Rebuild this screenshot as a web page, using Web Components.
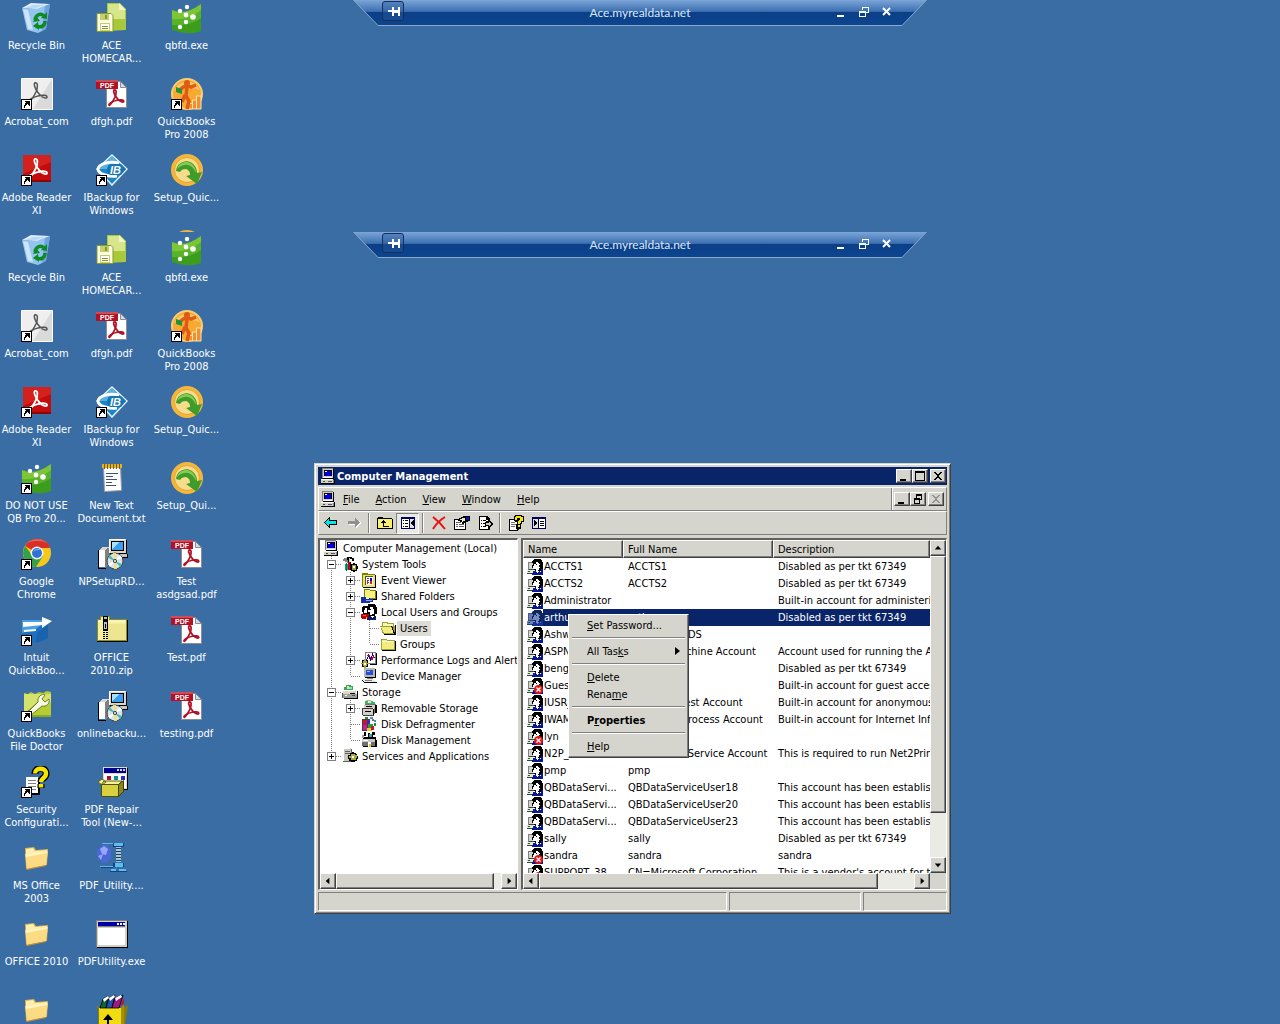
<!DOCTYPE html>
<html lang="en">
<head>
<meta charset="utf-8">
<title>Computer Management</title>
<style>
  :root {
    --desk: #3a6da4;
    --face: #d5d5cd;
    --shade: #808080;
    --dark: #404040;
    --navy: #0a246a;
    --ui-font: "DejaVu Sans Condensed", "DejaVu Sans", sans-serif;
  }
  html, body {
    margin: 0;
    height: 100%;
  }
  body {
    background: var(--desk);
    font: 11px/13px var(--ui-font);
    color: #000;
    overflow: hidden;
  }
</style>
</head>
<body>

<desk-screen class="upper" style="--screen: 232px">
  <remote-bar slot="bar">Ace.myrealdata.net</remote-bar>
  <desk-icon icon="recycle">Recycle Bin</desk-icon>
  <desk-icon icon="homecare">ACE<br>HOMECAR...</desk-icon>
  <desk-icon icon="qbfd">qbfd.exe</desk-icon>
  <desk-icon icon="acrobat" shortcut>Acrobat_com</desk-icon>
  <desk-icon icon="pdf">dfgh.pdf</desk-icon>
  <desk-icon icon="quickbooks" shortcut>QuickBooks<br>Pro 2008</desk-icon>
  <desk-icon icon="reader" shortcut>Adobe Reader<br>XI</desk-icon>
  <desk-icon icon="ibackup" shortcut>IBackup for<br>Windows</desk-icon>
  <desk-icon icon="setup">Setup_Quic...</desk-icon>
  <desk-icon icon="setup" style="grid-column: 3"></desk-icon>
</desk-screen>

<desk-screen class="lower" style="--screen: calc(100vh - 232px)">
  <remote-bar slot="bar">Ace.myrealdata.net</remote-bar>
  <desk-icon icon="recycle">Recycle Bin</desk-icon>
  <desk-icon icon="homecare">ACE<br>HOMECAR...</desk-icon>
  <desk-icon icon="qbfd">qbfd.exe</desk-icon>
  <desk-icon icon="acrobat" shortcut>Acrobat_com</desk-icon>
  <desk-icon icon="pdf">dfgh.pdf</desk-icon>
  <desk-icon icon="quickbooks" shortcut>QuickBooks<br>Pro 2008</desk-icon>
  <desk-icon icon="reader" shortcut>Adobe Reader<br>XI</desk-icon>
  <desk-icon icon="ibackup" shortcut>IBackup for<br>Windows</desk-icon>
  <desk-icon icon="setup">Setup_Quic...</desk-icon>
  <desk-icon icon="qbfd" shortcut>DO NOT USE<br>QB Pro 20...</desk-icon>
  <desk-icon icon="textdoc">New Text<br>Document.txt</desk-icon>
  <desk-icon icon="setup">Setup_Qui...</desk-icon>
  <desk-icon icon="chrome" shortcut>Google<br>Chrome</desk-icon>
  <desk-icon icon="installer">NPSetupRD...</desk-icon>
  <desk-icon icon="pdf">Test<br>asdgsad.pdf</desk-icon>
  <desk-icon icon="intuit" shortcut>Intuit<br>QuickBoo...</desk-icon>
  <desk-icon icon="zip">OFFICE<br>2010.zip</desk-icon>
  <desk-icon icon="pdf">Test.pdf</desk-icon>
  <desk-icon icon="doctor" shortcut>QuickBooks<br>File Doctor</desk-icon>
  <desk-icon icon="installer">onlinebacku...</desk-icon>
  <desk-icon icon="pdf">testing.pdf</desk-icon>
  <desk-icon icon="security" shortcut>Security<br>Configurati...</desk-icon>
  <desk-icon icon="repair">PDF Repair<br>Tool (New-...</desk-icon>
  <desk-icon icon="folder32" style="grid-column: 1">MS Office<br>2003</desk-icon>
  <desk-icon icon="utility">PDF_Utility....</desk-icon>
  <desk-icon icon="folder32" style="grid-column: 1">OFFICE 2010</desk-icon>
  <desk-icon icon="exe">PDFUtility.exe</desk-icon>
  <desk-icon icon="folder32" style="grid-column: 1"></desk-icon>
  <desk-icon icon="rar"></desk-icon>
</desk-screen>

<mmc-window>
  <span slot="title">Computer Management</span>
  <mmc-menubar slot="bars"></mmc-menubar>
  <mmc-toolbar slot="bars"></mmc-toolbar>
  <mmc-tree slot="tree"></mmc-tree>
  <mmc-users slot="list"></mmc-users>
</mmc-window>

<context-menu>
  <menu-item><u>S</u>et Password...</menu-item>
  <hr>
  <menu-item submenu>All Tas<u>k</u>s</menu-item>
  <hr>
  <menu-item><u>D</u>elete</menu-item>
  <menu-item>Rena<u>m</u>e</menu-item>
  <hr>
  <menu-item default>P<u>r</u>operties</menu-item>
  <hr>
  <menu-item><u>H</u>elp</menu-item>
</context-menu>

<script>
// 16px art, drawn on the pixel grid
const SMALL = {
  computer: `<path fill="#d4d0c8" d="M2 0h11v10H2z"/><path fill="#808080" d="M2 0h11v1H3v9H2z"/><path fill="#000" d="M13 1h1v10H3v-1h10z"/>
    <path fill="#000" d="M4 2h8v6H4z"/><path fill="#0000e0" d="M5 3h6v5H5z"/><path fill="#fff" d="M5 3h2v1H5zM3 9h9v1H3z"/>
    <path fill="#d4d0c8" d="M1 12h12v3H1z"/><path fill="#fff" d="M1 11h12v1H1z"/><path fill="#000" d="M14 11h1v5H1v-1h13z"/><path fill="#808080" d="M13 12h1v3h-1z"/><path fill="#008000" d="M3 13h2v1H3z"/><path fill="#555" d="M8 13h4v1H8z"/>`,
  device: `<path fill="#b8b8b0" d="M3 0h11v9H3z"/><path fill="#000" d="M14 1h1v9H4V9h10zM5 2h7v5H5z"/><path fill="#2a4ad8" d="M5 2h7v5H5z"/><path fill="#9ac0ff" d="M6 3h3v1H6z"/>
    <path fill="#808080" d="M6 10h6v1H6z"/><path fill="#e8e8e0" d="M1 11h11l3 3H4z"/><path fill="#000" d="M4 14h12v1H4zM1 12h1v1h1v1h1v1H3v-1H2v-1H1z"/><path fill="#808080" d="M4 12h7v1H4z"/>`,
  user: `<path fill="#808080" d="M1 3h5v1H2v7H1z"/><path fill="#d4d4cc" d="M2 4h4v6H2z"/><path fill="#404040" d="M2 10h5v1H2zM0 14h7v1H0z"/><path fill="#e8e8e0" d="M0 11h6v3H0z"/><path fill="#008000" d="M1 12h2v1H1z"/>
    <path fill="#000" d="M7 0h7v1h1v2h1v8h-1v1H9v-1H7V9H5V6h1V4H5V2h1V1h1z"/><path fill="#fff" d="M9 3h2v1h1v1h1v4h-1v2h-1v1H9v-2H7V9H6V7h1V5h2z"/><path fill="#000" d="M9 5h1v1H9zM12 6h1v2h-1z"/>
    <path fill="#0a1890" d="M6 12h2v-1h1v2h1v1h1v-1h1v-1h2v-2h2v6H5v-2h1z"/><path fill="#fff" d="M13 12h1v1h-1z"/>`,
  group: `<path fill="#000" d="M2 2h6v2h1v6H2V8H1V3h1z"/><path fill="#fff" d="M4 4h2v5H3V6h1z"/><path fill="#c00000" d="M0 10h8v5H1v-1H0z"/><path fill="#ff5050" d="M2 11h3v1H2z"/>
    <path fill="#000" d="M7 0h7v1h1v2h1v7h-2v2H8v-2H6V3h1z"/><path fill="#fff" d="M9 3h3v2h1v5h-2v1H9V8H7V6h2z"/><path fill="#000" d="M9 5h1v1H9z"/><path fill="#10186a" d="M7 12h2l2 2 2-2h2v4H6v-2h1z"/><path fill="#e0c020" d="M5 13h1v2H5z"/>`,
  tools: `<path fill="#808080" d="M2 2h3v2h1v1h1v2H5V6H3V5H1V3h1z"/><path fill="#000" d="M5 1h5v2H8v3h1v8H6V4H5z"/><path fill="#c8c8c8" d="M7 2h1v4H7z"/><path fill="#c00020" d="M6 6h2v8H6z"/>
    <path fill="#000" d="M10 2h2v3h-2z"/><path fill="#10a0a0" d="M3 8h3v6H3z"/><path fill="#008000" d="M4 7h1v8H4z"/><path fill="#000" d="M9 8h2V7h2v1h2v2h1v3h-1v2h-2v1h-2v-1H9v-2H8v-3h1z"/><path fill="#a0a048" d="M10 9h4v5h-4z"/><path fill="#fff" d="M11 10h2v2h-2z"/>`,
  event: `<path fill="#000" d="M2 2h5l1 1h7v13H2z"/><path fill="#f0e068" d="M1 1h5l1 1h7v13H1z"/><path fill="#808000" d="M1 1h5l1 1h7v1H1zM1 3h1v12H1z"/><path fill="#fff" d="M4 4h8v9H4z"/><path fill="#505050" d="M4 4h8v1H4zM4 5h1v8H4zM6 6h2v1H6zM6 8h2v1H6zM6 10h2v1H6z"/><path fill="#0000d0" d="M9 6h2v3H9z"/><path fill="#d02020" d="M9 9h2v3H9zM6 9h1v3H6z"/>`,
  shared: `<path fill="#808000" d="M3 1h5l1 1h6v9H3z"/><path fill="#f8f080" d="M4 2h4l1 1h5v7H4z"/><path fill="#000" d="M15 3h1v9H4v-1h11z"/><path fill="#1830a0" d="M0 9h5v1h4v1h3v3H9v1H0z"/><path fill="#80b0ff" d="M5 12h6v1H5z"/><path fill="#fff" d="M5 10h3v1H5z"/>`,
  folder: `<path fill="#a0a030" d="M1 3h5l1 1h8v10H1z"/><path fill="#f0ec80" d="M2 4h4l1 1h7v8H2z"/><path fill="#fffff0" d="M2 5h11v1H2z"/><path fill="#000" d="M15 5h1v10H2v-1h13z"/>`,
  opened: `<path fill="#a0a030" d="M2 2h5l1 1h6v3h1v8H3l-3-8h2z"/><path fill="#f8f8b8" d="M3 3h3l1 1h6v2H3z"/><path fill="#f0ec80" d="M1 7h10l3 6H4z"/><path fill="#000" d="M11 6h1l3 7V5h1v10H4v-1h10z"/>`,
  perf: `<path fill="#808080" d="M4 0h11v12H4z"/><path fill="#fff" d="M5 1h9v10H5z"/><path fill="none" stroke="#0000c0" d="M5.500 8.500l2-5 2 4 2-5 2 4"/><path fill="none" stroke="#d00020" d="M6 3.500h2l3 4 2-4"/><path fill="#000" d="M15 1h1v12H9v-1h6zM1 8h6v7H1z"/><path fill="#b0a838" d="M2 9h4v5H2z"/><path fill="#b0a838" d="M3 7h2v9H3zM0 11h8v1H0z"/><path fill="#fff" d="M3 11h2v2H3z"/>`,
  storage: `<path fill="#40a060" d="M4 1h5v1h2v4H2V3h2z"/><path fill="#e0f060" d="M5 2h2v3H5z"/><path fill="#80e0e0" d="M7 3h3v2H7z"/><path fill="#d8d8d0" d="M1 6h13v4H1z"/><path fill="#a0a098" d="M1 10h14v4H1z"/><path fill="#000" d="M15 7h1v8H2v-1h13zM8 9h5v1H8z"/><path fill="#fff" d="M1 6h12v1H1zM3 11h2v1H3z"/><path fill="#585858" d="M0 9h1v5H0zM10 11h3v1h-3z"/>`,
  removable: `<path fill="#e8c048" d="M5 0h5v2H5z"/><path fill="#40b070" d="M4 1h8v1h2v3H4z"/><path fill="#c8f0f0" d="M7 1h3v2H7z"/><path fill="#707070" d="M4 4h11v1H4z"/><path fill="#d0d0c8" d="M3 5h11v3H3zM1 8h11v7H1z"/><path fill="#404040" d="M1 8h11v1H1zM1 9h1v6H1zM2 15h11v1H2z"/><path fill="#000" d="M5 6h6v1H5zM4 11h6v1H4zM14 5h2v8h-2zM12 9h1v6h-1z"/><path fill="#808080" d="M13 8h1v6h-1z"/>`,
  defrag: `<path fill="#404040" d="M1 3h8v12H1z"/><path fill="#d01030" d="M2 4h4v5H2z"/><path fill="#3030c0" d="M6 4h3v4H6z"/><path fill="#20a040" d="M7 8h5v4H7z"/><path fill="#c020a0" d="M2 9h4v5H2z"/><path fill="#e8d020" d="M6 12h5v3H6z"/><path fill="#d01030" d="M10 10h3v4h-3z"/><path fill="#20a0c0" d="M9 1h3v2H9zM13 4h2v2h-2z"/><path fill="#d040a0" d="M11 3h2v2h-2z"/><path fill="#209020" d="M13 7h2v3h-2zM4 1h3v2H4z"/>`,
  diskmgmt: `<path fill="#000" d="M3 0h2v4H3zM7 1h2v4H7zM11 0h3v3h-2v2h-1zM2 5h13v3H2z"/><path fill="#a0a0a0" d="M1 3h2v3H1z"/><path fill="#30a0b0" d="M8 2h3v3H8z"/><path fill="#c8c8c0" d="M1 7h13v3H1z"/><path fill="#707070" d="M1 10h14v4H1z"/><path fill="#000" d="M14 8h2v7H2v-1h12z"/><path fill="#fff" d="M2 8h5v1H2zM7 10h3v5H7z"/><path fill="#e8d020" d="M8 12h2v3H8z"/>`,
  services: `<path fill="#c8c8c0" d="M1 0h8v14H1z"/><path fill="#fff" d="M1 0h7v1H2v12H1z"/><path fill="#606060" d="M3 3h5v1H3zM3 5h5v1H3zM9 1h1v13H9zM1 13h8v1H1z"/><path fill="#000" d="M8 5h2V4h2v1h2v1h1v2h1v3h-1v2h-2v1H9v-1H7v-2H6V7h2z"/><path fill="#b0a838" d="M9 6h4v1h2v3h-1v2H9v-2H7V8h2z"/><path fill="#fff" d="M10 8h2v2h-2z"/>`,
  back: `<path fill="#000" d="M7 2v3h7v5H7v3h-1v-1H5v-1H4v-1H3V9H2V8H1V7h1V6h1V5h1V4h1V3h1V2z"/><path fill="#00e8e8" d="M6 4v2h7v3H6v2L2 8V7z"/>`,
  forward: `<path fill="#fff" d="M10 4v2H3v4h7v3l6-5z"/><path fill="#909090" d="M9 3v3H2v3h7v3l5-4V7z"/>`,
  up: `<path fill="#000" d="M0 3h1V2h5v1h9v1h1v10H0z"/><path fill="#f8f070" d="M1 4h14v9H1z"/><path fill="#000" d="M6 5h1v1h1v1h1v1H7v3h5v1H6V8H4V7h1V6h1z"/>`,
  treepane: `<path fill="#000060" d="M1 2h14v12H1z"/><path fill="#fff" d="M2 4h7v9H2z"/><path fill="#e0e0e0" d="M10 4h4v9h-4z"/><path fill="#000" d="M3 5h1v1H3zM3 8h1v1H3zM3 11h1v1H3zM5 5h3v1H5zM5 8h3v1H5zM5 11h3v1H5zM13 5h1v6h-1v-1h-1V9h-1V7h1V6h1z"/>`,
  console: `<path fill="#000060" d="M1 2h14v12H1z"/><path fill="#e0e0e0" d="M2 4h5v9H2z"/><path fill="#fff" d="M8 4h6v9H8z"/><path fill="#000" d="M3 5h1v1h1v1h1v2H5v1H4v1H3zM9 6h4v1H9zM9 8h4v1H9zM9 10h4v1H9z"/>`,
  del: `<path fill="none" stroke="#e81010" stroke-width="2" shape-rendering="auto" d="M2 2c4 3 8 7 12 12M14 2C9 5 5 9 2 14"/>`,
  props: `<path fill="#000" d="M0 4h12v11H0z"/><path fill="#fff" d="M1 5h10v9H1z"/><path fill="#606060" d="M2 9h2v1H2zM5 9h5v1H5zM2 11h2v1H2zM5 11h5v1H5zM2 7h5v1H2z"/><path fill="#000" d="M4 5h1V3h2V2h2V1h7v5h-2v1h-2v1h-2v1H8V7H6V6H4z"/><path fill="#f0e8d0" d="M6 4h2V3h3v3H9v1H8V5H6z"/><path fill="#0a18a0" d="M12 2h3v3h-3z"/>`,
  exportlist: `<path fill="#000" d="M2 1h8l3 3v11H2z"/><path fill="#fff" d="M3 2h6v3h3v9H3z"/><path fill="#000" d="M4 5h1v1H4zM6 5h3v1H6zM4 8h1v1H4zM6 8h3v1H6zM4 11h1v1H4zM6 11h3v1H6zM9 6h2V4l5 5-5 5v-3H8V7z"/><path fill="#c8c8c0" d="M9 8h3V7l2 2-2 2v-1H9z"/>`,
  help: `<path fill="#000" d="M1 4h11v9l-3 3H1z"/><path fill="#fff" d="M2 5h9v7l-3 3H2z"/><path fill="#707070" d="M3 7h4v1H3zM3 9h5v1H3zM3 11h4v1H3z"/><path fill="#000" d="M7 0h7v1h2v6h-2v2h-1v5H8V9h1V7H7v-1H6V1h1z"/><path fill="#f8e800" d="M8 1h5v1h2v4h-2v2h-1v1h-2V6h1V5h1V3H9v2H7V2h1zM10 10h2v2h-2z"/>`
};

const OFF_BADGE = '<circle cx="11.500" cy="11.500" r="4.500" fill="#e01818" shape-rendering="auto"/><path stroke="#fff" stroke-width="1.300" shape-rendering="auto" d="M9.500 9.500l4 4M13.500 9.500l-4 4"/>';
const PICKED_TINT = '<path fill="#1c4098" opacity=".6" d="M1 3h4V1h2V0h7v1h1v2h1v13H5v-1H0v-4h1z"/>';

// three crossing strokes of the Adobe mark, for a 32px canvas
const acrobatMark = (c, w) => `<g fill="none" stroke="${c}" stroke-width="${w}" stroke-linecap="round"><path d="M14 5c3-1 3 4 1 9-2 4-4 8-7 10"/><path d="M14 5c-2 1 1 8 5 12 3 3 7 4 7 2s-4-2-8-1.500"/><path d="M8 24c-2-1 3-5 11-6.500"/></g>`;

// 32px art for the desktop
const LARGE = {
  recycle: `<path fill="#93c3f0" d="M1 6l14 1 14-5-4 25-8 4-11-3z"/><path fill="#dceefc" d="M1 6l9-5 19 1-13 5z"/><path fill="#b7d8f6" d="M4 6l8-3 12 0-9 3z"/><path fill="#5d97d6" d="M24 4l5-2-4 25-4 2z" opacity=".7"/><path fill="#fff" opacity=".55" d="M2 7l5 1 5 20-5-1z"/>
    <path fill="none" stroke="#0f8a1e" stroke-width="3.500" d="M14 18c1-6 6-7 9-4M24 19c0 5-4 7-8 5"/><path fill="#0f8a1e" d="M20 16l6 1 0-7zM17 20l-5 4 6 4zM12 20l3-6 4 5z"/>`,
  homecare: `<path fill="#a9c83a" d="M11 1h13l6 6v21l-19 1z"/><path fill="#d7e68a" d="M12 2h11v6h6v9H12z"/><path fill="#f0f6c8" d="M23 1l7 7h-7z"/><path fill="#fdfde6" stroke="#879a28" d="M1 11.500h14l2 2v16H1z"/><path fill="#c4d06a" d="M4 12h9v6H4zM4 21h10v8H4z"/><path fill="#fff" d="M5 22h8v6H5z"/><path fill="#879a28" d="M6 24h6v1H6zM6 26h6v1H6zM9 13h2v4H9z"/>`,
  qbfd: `<path fill="#3c9c1c" d="M1 8c9 4 18 2 29-6v27c-9 4-19 2-29-1z"/><path fill="#7cc534" d="M1 8c9 4 18 2 29-6v9c-9 9-19 11-29 10z"/><path fill="#56b228" d="M1 17c10 1 19-1 29-9v8C20 23 10 24 1 23z"/><g fill="#fff"><circle cx="9" cy="9" r="2.200"/><circle cx="16" cy="5" r="2.200"/><circle cx="15" cy="13" r="2.400"/><circle cx="22" cy="15" r="2.800"/><circle cx="15" cy="20" r="2.200"/><circle cx="9" cy="25" r="2.200"/></g>`,
  acrobat: `<path fill="#efefef" stroke="#fff" d="M.5.5h31v31H.5z"/><path fill="#dadada" d="M31 1v30H12z"/>${acrobatMark('#555', 1.5)}`,
  reader: `<path fill="#c40b0b" d="M2 1h28v27H2z"/><path fill="#e0302a" d="M2 1h28v7L2 20z" opacity=".6"/><path fill="#8d0606" d="M2 26h28v2H2z"/>${acrobatMark('#fff', 1.8)}`,
  pdf: `<path fill="#fff" stroke="#8c8c94" d="M10.500 3.500h14l6 6v20h-20z"/><path fill="#d9d9e0" stroke="#8c8c94" d="M24.500 3.500l6 6h-6z"/><path fill="#b11226" d="M0 2h22v9H0z"/><path fill="#d34a56" d="M0 2h22v2H0z"/><text x="4" y="10" font-family="Liberation Sans, sans-serif" font-size="7" font-weight="700" fill="#fff">PDF</text><g transform="translate(7 8) scale(.8)">${acrobatMark('#b11226', 2.2)}</g>`,
  quickbooks: `<circle cx="16" cy="16" r="15" fill="#f7a932" stroke="#f8cf74" stroke-width="2"/><path fill="#fbc768" d="M3 13a14 14 0 0 1 26-1c-8-3-18-4-26 1z"/><path fill="#f09030" stroke="#fce4a8" d="M17.500 31V25.500h4V22h4v-4h4.500v13z"/><path stroke="#fce4a8" d="M21.500 31v-6M25.500 31v-9"/><circle cx="16" cy="5" r="3" fill="#df5a16"/><path fill="none" stroke="#df5a16" stroke-width="3.500" d="M8 13c4-5 8-6 12-4l5-2M16 9l-1 9 3 5-2 8M14 17l-3 7"/><path fill="#1e9438" d="M5 9l6 2v5l-6-2z"/>`,
  ibackup: `<path fill="#1c86c4" stroke="#e8f4fc" stroke-width="1.500" d="M16 1l15 14-15 16L1 15z"/><path fill="#73c4ea" d="M16 2l13 13H3z" opacity=".7"/><path fill="none" stroke="#fff" stroke-width="3" d="M23 9C12 7 3 10 2 15c0 5 10 8 19 7"/><path fill="#1675b4" d="M14 10h11l5 5-5 6H14c-4-3-4-8 0-11z"/><text x="14" y="20" font-family="Liberation Sans, sans-serif" font-size="11" font-weight="700" font-style="italic" fill="#fff">IB</text>`,
  setup: `<circle cx="16" cy="16" r="16" fill="#f4b73c"/><circle cx="16" cy="16" r="12.500" fill="#f7dc8c" stroke="#e8a42c"/><path fill="#3f9c2a" d="M5 17C6 8 15 5 21 9c4 3 5 7 5 10l5-1-5 12-11-8 4-1c0-3-1-5-4-6-3 0-5 1-6 3z"/><path fill="#86cc50" d="M6 15c2-7 10-9 15-5 3 3 4 6 4 9-4-9-11-11-19-4z"/>`,
  textdoc: `<path fill="#fff" stroke="#9a9aa4" d="M7.500 4.500l17-1 1 25-17 1z"/><path fill="#e0b030" d="M6 2h20v4H6z"/><path fill="#7c5c10" d="M8 2h1v5H8zM11 2h1v5h-1zM14 2h1v5h-1zM17 2h1v5h-1zM20 2h1v5h-1zM23 2h1v5h-1z"/><path fill="#44506c" d="M10 11h12v1H10zM10 14h7v1h-7zM10 17h11v1H10zM10 20h6v1h-6zM10 23h10v1H10z"/>`,
  chrome: `<circle cx="16" cy="15" r="14" fill="#f6c81c"/><path fill="#d93025" d="M16 15L4 8a14 14 0 0 1 24-1l1 3H16z"/><path fill="#35a047" d="M4 8a14 14 0 0 0 11 21l7-11-6-3-5 2z"/><path fill="#f2695c" d="M7 5a14 14 0 0 1 19 0c-6-3-13-3-19 0z"/><circle cx="16" cy="15" r="6.500" fill="#f4f4f4"/><circle cx="16" cy="15" r="5" fill="#2f72d4"/><path fill="#7eaef0" d="M12 14a5 5 0 0 1 8-2c-3 0-6 0-8 2z"/>`,
  installer: `<g shape-rendering="crispEdges"><path fill="#d8d8d0" d="M13 1h17v14H13z"/><path fill="#fff" d="M13 1h16v1H14v13h-1z"/><path fill="#000" d="M30 2h1v14H14v-1h16zM15 3h13v10H15z"/><path fill="#3c9cf0" d="M16 4h11v8H16z"/><path fill="#a8e0ff" d="M16 4h8l-8 7z"/><path fill="#c8c8c0" d="M21 16h10v3H21z"/><path fill="#000" d="M21 19h10v1H21zM31 16h1v4h-1z"/><path fill="#fff" d="M3 12h6v17H3z"/><path fill="#808080" d="M9 10h4v17l-4 3z"/><path fill="#d8d8d0" d="M3 12l3-3h8l-5 3z"/><path fill="#000" d="M2 12h1v18h7v1H2z"/></g><circle cx="19" cy="23" r="8" fill="#d8e4e4" stroke="#444"/><path fill="#50b8b0" d="M19 23l-7-3 2-3zM19 23l7 3-2 3z"/><path fill="#f4e070" d="M19 23l-2-8h3zM19 23l2 8h-3z"/><path fill="#fff" d="M19 23l7-3-2-3zM19 23l-7 3 2 3z"/><circle cx="19" cy="23" r="2" fill="#333"/><circle cx="19" cy="23" r="1" fill="#fff"/>`,
  intuit: `<path fill="#1e6fbe" d="M1 6h26v16l-3 5-14 2-9-2z"/><path fill="#4aa0e4" d="M1 6h26l-12 9-14 4z"/><path fill="#114f94" d="M27 11v13l-12 5 1-10z" opacity=".4"/><path fill="#fff" d="M2 8h19V3l10 4-10 7v-3L2 13z"/><path fill="#fff" d="M3 16l12-1v2L3 18z"/>`,
  zip: `<g shape-rendering="crispEdges"><path fill="#8c8c20" d="M1 5h3V2h10v3h17v22H1z"/><path fill="#f6ee9c" d="M2 6h3V3h8v3h17v20H2z"/><path fill="#fffbd8" d="M2 7h27v1H2z"/><path fill="#e2d67c" d="M12 10h18v16H12z" opacity=".4"/><path fill="#000" d="M31 6h1v22H1v-1h30zM7 2h5v15H7z"/><path fill="#c0c0c0" d="M8 3h3v2H8zM8 8h3v7H8z"/><path fill="#000" d="M9 10h1v4H9zM7 18h2v1H7zM10 18h2v1h-2zM7 20h2v1H7zM10 20h2v1h-2zM7 22h2v1H7zM10 22h2v1h-2zM7 24h2v1H7zM10 24h2v1h-2z"/></g>`,
  doctor: `<path fill="#b5cc34" d="M3 3l4 1 3-2 4 2 4-2 4 1 4-2 4 1v25H3z"/><path fill="#d5e36c" d="M3 4h27v8L3 22z"/><path fill="#8da81c" d="M3 25h27v2H3z"/><path fill="none" stroke="#6b801c" stroke-width="5" stroke-linecap="round" d="M7 24l12-11"/><path fill="#f6f8e4" stroke="#6b801c" d="M17 12c-1-5 4-9 7-7l-3 4 3 3 4-3c1 5-3 8-7 7L9 26c-3 1-4-1-3-3z"/>`,
  security: `<g shape-rendering="crispEdges"><path fill="#000" d="M6 12h13v17H6z"/><path fill="#fff" d="M5 11h12v16H5z"/><path fill="#808080" d="M7 14h8v1H7zM7 17h8v1H7zM7 20h8v1H7zM7 23h8v1H7z"/></g><path fill="none" stroke="#000" stroke-width="7" d="M14 8c0-8 12-7 11 0 0 4-5 4-5 8M20 18v4"/><path fill="none" stroke="#f4e400" stroke-width="4.500" d="M14 7.500c0-7 12-6 11 .5 0 4-5 4-5 8M20 18v3.500"/>`,
  repair: `<g shape-rendering="crispEdges"><path fill="#000" d="M8 2h24v22H8z"/><path fill="#d8d8d0" d="M7 1h24v22H7z"/><path fill="#fff" d="M8 8h22v14H8z"/><path fill="#000090" d="M8 2h22v5H8z"/><path fill="#d8d8d0" d="M21 3h2v2h-2zM24 3h2v2h-2zM27 3h2v2h-2z"/><path fill="#b01030" d="M11 10h4v4h-4z"/><path fill="#109090" d="M18 10h4v4h-4z"/><path fill="#2030c0" d="M25 10h4v4h-4z"/></g><path fill="#f6f09c" stroke="#606000" d="M5 19l3-4h18l-4 4zM6 19L2 16l4-3 4 3z"/><path fill="#d8d040" stroke="#505000" d="M5.500 18.500h17v12h-17z"/><path fill="#8c8818" stroke="#404000" d="M22.500 18.500l5-4v11l-5 5z"/>`,
  folder32: `<path fill="#e2b04c" d="M4 6l9-1 2 3 12-1-1 16-21 4z"/><path fill="#fff0b0" d="M5 7l7-1 2 3 12-1v3L5 13z"/><path fill="#fbdc84" d="M4 12l23-3-2 14-19 4z"/><path fill="#fff3c0" d="M5 12l21-3v2L5 15z"/><path fill="#c88f34" d="M5 27l20-4v1L6 28z"/>`,
  utility: `<path fill="#4868d8" d="M1 8l5-5h5l4 4v9l-5 5H6l-1-3-4 1 2-5-2-1z"/><path fill="#98a4f4" d="M4 7l4-3 4 3-2 6-4-1zM2 14l5-2-2 6z"/><g shape-rendering="crispEdges"><path fill="#1b3c88" d="M17 1h11v4H17zM17 21h11v4H17zM14 29h17v1H14zM5 25h12v1H5z"/><path fill="#58c0ec" d="M18 1h9v3h-9zM19 21h8v4h-8zM15 27h5v2h-5zM23 27h7v2h-7zM4 24h13v1H4zM6 1h11v1H6z"/><path fill="#a8c8d8" d="M20 5h5v15h-5z"/><path fill="#203c60" d="M20 6h5v1h-5zM20 9h5v1h-5zM20 12h5v1h-5zM20 15h5v1h-5zM20 18h5v1h-5z"/></g>`,
  exe: `<g shape-rendering="crispEdges"><path fill="#000" d="M1 3h31v27H1z"/><path fill="#d0d0c8" d="M0 2h31v27H0z"/><path fill="#808080" d="M0 2h31v1H1v26H0zM2 8h27v1H2z"/><path fill="#0000a0" d="M2 4h27v4H2z"/><path fill="#fff" d="M2 10h27v17H2zM21 5h2v2h-2zM24 5h2v2h-2zM27 5h2v2h-2z"/></g>`,
  rar: `<path fill="#8c7c08" d="M0 12l5 2v18H2V16zM32 11l-6 3v18h3z"/><path fill="#f0dc10" d="M3 14h22v18H3z"/><path fill="#a89008" d="M25 14l3-4v22h-3z"/><path fill="#0a6838" stroke="#000" stroke-width=".8" d="M4 14l3-9 5-3-2 12z"/><path fill="#2050b0" stroke="#000" stroke-width=".8" d="M10 14l3-10 6-3-3 13z"/><path fill="#a01880" stroke="#000" stroke-width=".8" d="M16 14l3-10 8-3-4 13z"/><path fill="#fff" d="M7 5l5-3 1 2-5 4zM13 4l5-3 1 2-5 4zM19 4l6-3 1 2-6 4z"/><path fill="#000" d="M11 32v-6H7l5-6 5 6h-4v6z"/><path fill="#c01820" d="M24 12l4-8v6z"/>`
};

const SHORTCUT = `<g shape-rendering="crispEdges"><path fill="#000" d="M0 21h11v11H0z"/><path fill="#fff" d="M1 22h9v9H1z"/><path fill="#000" d="M4 23h5v5H8v-1H7v-1H6v1H5v1H4v2H3v-3h1v-2h1v-1h-1z"/></g>`;

const small = (name, extra = '') =>
  `<svg width="16" height="16" viewBox="0 0 16 16" shape-rendering="crispEdges" aria-hidden="true">${SMALL[name]}${extra}</svg>`;

// raised edge shared by buttons and scroll thumbs
const RAISED = `
  background: var(--face);
  border: 1px solid;
  border-color: #fff var(--dark) var(--dark) #fff;
  box-shadow: inset -1px -1px 0 var(--shade);
`;

class BaseElement extends HTMLElement {
  constructor() {
    super();
    this._shadowDOM = this.attachShadow({ mode: 'open' });
  }

  connectedCallback() {
    this.render();
  }
}

class DeskScreen extends BaseElement {
  render() {
    this._shadowDOM.innerHTML = `
      <style>
        :host {
          display: block;
          position: relative;
          height: var(--screen);
          overflow: hidden;
        }
        .icons {
          display: grid;
          grid-template-columns: repeat(3, 74px);
          grid-auto-rows: 76px;
          column-gap: 1px;
        }
        .bar {
          position: absolute;
          top: 0;
          left: 0;
          right: 0;
          display: flex;
          justify-content: center;
          pointer-events: none;
        }
      </style>
      <div class="icons"><slot></slot></div>
      <div class="bar"><slot name="bar"></slot></div>`;
  }
}
customElements.define('desk-screen', DeskScreen);

class DeskIcon extends BaseElement {
  render() {
    const link = this.hasAttribute('shortcut') ? SHORTCUT : '';
    this._shadowDOM.innerHTML = `
      <style>
        :host { display: block; }
        button {
          display: flex;
          flex-direction: column;
          align-items: center;
          gap: 5px;
          width: 100%;
          padding: 2px 0 0;
          border: 0;
          background: none;
          font: inherit;
          color: #fff;
          white-space: nowrap;
        }
        span {
          margin-right: 1px;
          text-align: center;
        }
      </style>
      <button type="button">
        <svg width="32" height="32" viewBox="0 0 32 32" aria-hidden="true">${LARGE[this.getAttribute('icon')]}${link}</svg>
        <span><slot></slot></span>
      </button>`;
  }
}
customElements.define('desk-icon', DeskIcon);

class RemoteBar extends BaseElement {
  render() {
    this._shadowDOM.innerHTML = `
      <style>
        :host {
          display: block;
          width: 574px;
          pointer-events: auto;
        }
        .bar {
          display: grid;
          grid-template-columns: 94px 1fr 94px;
          align-items: center;
          height: 26px;
          position: relative;
          font: 12px/16px Lato, "Open Sans", sans-serif;
          color: #dce8f8;
        }
        .shape {
          position: absolute;
          inset: 0;
          width: 100%;
          height: 100%;
          z-index: -1;
        }
        .pin { padding-left: 29px; }
        .title { text-align: center; }
        .keys {
          display: flex;
          gap: 7px;
        }
        button {
          width: 16px;
          height: 20px;
          padding: 0;
          border: 0;
          background: none;
        }
        .pin button {
          display: block;
          width: 22px;
          margin-bottom: 4px;
          border: 1px solid #14305c;
          border-radius: 3px;
          background: #2c5a9a66;
        }
        svg { display: block; }
      </style>
      <div class="bar">
        <svg class="shape" viewBox="0 0 574 26" preserveAspectRatio="none">
          <defs><linearGradient id="g" x1="0" y1="0" x2="0" y2="1">
            <stop offset="0" stop-color="#7fa8da"/><stop offset=".46" stop-color="#3b6fb0"/>
            <stop offset=".48" stop-color="#0b3f88"/><stop offset="1" stop-color="#0d458f"/>
          </linearGradient></defs>
          <path fill="url(#g)" stroke="#8ea9c9" d="M0 -.500L25 25.500H549L574 -.500"/>
        </svg>
        <div class="pin"><button type="button" aria-label="Pin"><svg width="20" height="18" viewBox="0 0 20 18" shape-rendering="crispEdges"><path fill="#fff" d="M5 8h4v2H5zM9 5h2v9H9zM11 8h4v3h-4zM15 5h2v9h-2z"/></svg></button></div>
        <div class="title"><slot></slot></div>
        <div class="keys">
          <button type="button" aria-label="Minimize"><svg width="16" height="20" shape-rendering="crispEdges"><path fill="#fff" d="M4 12h7v2H4z"/></svg></button>
          <button type="button" aria-label="Restore"><svg width="16" height="20" shape-rendering="crispEdges"><path fill="none" stroke="#fff" d="M6.500 7V4.500h6v5H10M3.500 8.500h6v5h-6zM3 9.500h6"/></svg></button>
          <button type="button" aria-label="Close"><svg width="16" height="20"><path fill="none" stroke="#fff" stroke-width="2" d="M4 5l7 7M11 5l-7 7"/></svg></button>
        </div>
      </div>`;
  }
}
customElements.define('remote-bar', RemoteBar);

class WinScroll extends BaseElement {
  render() {
    const across = this.hasAttribute('across');
    const arrows = across
      ? ['M9 4v7L5 7.500z', 'M6 4v7l4-3.500z']
      : ['M4 9h7L7.500 5z', 'M4 6h7l-3.500 4z'];
    const arrow = (d, label) =>
      `<button type="button" aria-label="${label}"><svg width="14" height="14" viewBox="0 0 15 15"><path d="${d}"/></svg></button>`;
    this._shadowDOM.innerHTML = `
      <style>
        :host {
          display: flex;
          flex-direction: ${across ? 'row' : 'column'};
          background: #ebebe6;
        }
        button {
          flex: none;
          box-sizing: border-box;
          width: 16px;
          height: 16px;
          padding: 0;
          ${RAISED}
        }
        svg { display: block; }
        .thumb {
          flex: ${this.getAttribute('thumb')};
          box-sizing: border-box;
          ${RAISED}
        }
        .rest { flex: ${this.getAttribute('rest')}; }
      </style>
      ${arrow(arrows[0], across ? 'Scroll left' : 'Scroll up')}
      <div class="thumb"></div><div class="rest"></div>
      ${arrow(arrows[1], across ? 'Scroll right' : 'Scroll down')}`;
  }
}
customElements.define('win-scroll', WinScroll);

// minimize / maximize / restore / close keys of a title bar
class WinKeys extends BaseElement {
  render() {
    const art = {
      min: ['Minimize', 'M3 9h6v2H3z'],
      max: ['Maximize', 'M2 1h10v10H2zM3 3v7h8V3z'],
      restore: ['Restore', 'M5 1h6v6H9v4H3V5h2zM6 3v2h3v1h1V3zM4 7v3h4V7z'],
      close: ['Close', 'M3 2h2v1h1v1h2V3h1V2h2v1h-1v1H9v1H8v2h1v1h1v1h1v1H9V9H8V8H6v1H5v1H3V9h1V8h1V7h1V5H5V4H4V3H3z']
    };
    const keys = this.getAttribute('keys').split(' ').map(k => `
      <button type="button" class="${k}" aria-label="${art[k][0]}"><svg width="14" height="12" shape-rendering="crispEdges"><path fill-rule="evenodd" d="${art[k][1]}"/></svg></button>`);
    this._shadowDOM.innerHTML = `
      <style>
        :host { display: flex; }
        button {
          width: 16px;
          height: 14px;
          padding: 0;
          box-sizing: border-box;
          overflow: hidden;
          ${RAISED}
        }
        .close { margin-left: 2px; }
        svg { display: block; }
        :host([dim]) .close path { fill: #909090; }
      </style>${keys.join('')}`;
  }
}
customElements.define('win-keys', WinKeys);

class MmcMenubar extends BaseElement {
  render() {
    const items = ['<u>F</u>ile', '<u>A</u>ction', '<u>V</u>iew', '<u>W</u>indow', '<u>H</u>elp'];
    this._shadowDOM.innerHTML = `
      <style>
        :host {
          display: flex;
          align-items: center;
          box-sizing: border-box;
          height: 24px;
          border: 1px solid;
          border-color: #fff var(--shade) var(--shade) #fff;
          padding-left: 1px;
        }
        svg { margin-right: -1px; }
        nav {
          display: flex;
          flex: 1;
        }
        nav button {
          padding: 0 8px;
          border: 0;
          background: none;
          font: inherit;
          color: inherit;
        }
        win-keys {
          align-self: stretch;
          align-items: center;
          padding: 0 2px;
          border-left: 1px solid var(--shade);
          box-shadow: inset 1px 0 0 #fff;
        }
      </style>
      ${small('computer')}
      <nav>${items.map(i => `<button type="button">${i}</button>`).join('')}</nav>
      <win-keys keys="min restore close" dim></win-keys>`;
  }
}
customElements.define('mmc-menubar', MmcMenubar);

class MmcToolbar extends BaseElement {
  render() {
    const tools = [
      ['back', 'Back'], ['forward', 'Forward'], null,
      ['up', 'Up One Level'], ['treepane', 'Show/Hide Console Tree', 'on'], null,
      ['del', 'Delete'], ['props', 'Properties'], ['exportlist', 'Export List'], null,
      ['help', 'Help'], ['console', 'Show/Hide Action Pane']
    ];
    this._shadowDOM.innerHTML = `
      <style>
        :host {
          display: flex;
          align-items: center;
          box-sizing: border-box;
          height: 24px;
          border: 1px solid;
          border-color: #fff var(--shade) var(--shade) #fff;
        }
        button {
          display: flex;
          align-items: center;
          justify-content: center;
          box-sizing: border-box;
          width: 23px;
          height: 21px;
          padding: 0;
          border: 1px solid transparent;
          background: none;
        }
        .on {
          border-color: var(--shade) #fff #fff var(--shade);
          background: #e9e9e4;
        }
        i {
          width: 1px;
          height: 20px;
          margin: 0 3px;
          background: var(--shade);
          border-right: 1px solid #fff;
        }
      </style>
      ${tools.map(t => t ? `<button type="button" class="${t[2] || ''}" aria-label="${t[1]}">${small(t[0])}</button>` : '<i></i>').join('')}`;
  }
}
customElements.define('mmc-toolbar', MmcToolbar);

// guides: one letter per 19px column
// | line, t tee, l end, + and - boxes, P a plus box with no line below
const NODES = [
  ['', 'computer', 'Computer Management (Local)'],
  ['-', 'tools', 'System Tools'],
  ['|+', 'event', 'Event Viewer'],
  ['|+', 'shared', 'Shared Folders'],
  ['|-', 'group', 'Local Users and Groups'],
  ['||t', 'opened', 'Users', true],
  ['||l', 'folder', 'Groups'],
  ['|+', 'perf', 'Performance Logs and Alerts'],
  ['|l', 'device', 'Device Manager'],
  ['-', 'storage', 'Storage'],
  ['|+', 'removable', 'Removable Storage'],
  ['|t', 'defrag', 'Disk Defragmenter'],
  ['|l', 'diskmgmt', 'Disk Management'],
  ['P', 'services', 'Services and Applications']
];

class MmcTree extends BaseElement {
  guide(ch) {
    const full = '<path class="d" d="M9.500 0v16"/>';
    const half = '<path class="d" d="M9.500 0v8"/>';
    const arm = '<path class="d" d="M10 8.500h9"/>';
    const box = '<path fill="#fff" stroke="#808080" d="M5.500 4.500h8v8h-8z"/><path stroke="#000" d="M7 8.500h5"/>';
    const plus = '<path stroke="#000" d="M9.500 6v5"/>';
    const parts = {
      '|': full,
      't': full + arm,
      'l': half + arm,
      '-': full + arm + box,
      '+': full + arm + box + plus,
      'P': half + arm + box + plus
    };
    return `<svg width="19" height="16" shape-rendering="crispEdges" aria-hidden="true">${parts[ch]}</svg>`;
  }

  render() {
    const rows = NODES.map(([guides, icon, text, picked]) => `
      <div class="row" role="treeitem">${[...guides].map(this.guide).join('')}<span class="icon">${small(icon)}</span><span class="text${picked ? ' picked' : ''}">${text}</span></div>`);
    this._shadowDOM.innerHTML = `
      <style>
        :host {
          display: flex;
          flex-direction: column;
          min-width: 0;
          min-height: 0;
          background: #fff;
        }
        .view {
          flex: 1;
          min-height: 0;
          overflow: hidden;
          padding-left: 2px;
        }
        .row {
          display: flex;
          align-items: center;
          height: 16px;
          white-space: nowrap;
        }
        svg {
          display: block;
          flex: none;
        }
        .d {
          stroke: #808080;
          stroke-dasharray: 1 1;
        }
        .icon { margin: 0 1px; }
        .text {
          padding: 1px 3px;
        }
        .picked { background: #dcdcd4; }
      </style>
      <div class="view" role="tree">${rows.join('')}</div>
      <win-scroll across thumb="157" rest="7"></win-scroll>`;
  }
}
customElements.define('mmc-tree', MmcTree);

const USERS = [
  ['ACCTS1', 'ACCTS1', 'Disabled as per tkt 67349'],
  ['ACCTS2', 'ACCTS2', 'Disabled as per tkt 67349'],
  ['Administrator', '', 'Built-in account for administering'],
  ['arthur', 'arthur', 'Disabled as per tkt 67349', 'picked'],
  ['Ashwin', 'Ashwin MYRDS', ''],
  ['ASPNET', 'ASP.NET Machine Account', 'Account used for running the ASP.NET'],
  ['benga', '', 'Disabled as per tkt 67349'],
  ['Guest', '', 'Built-in account for guest access', 'off'],
  ['IUSR_ACE', 'Internet Guest Account', 'Built-in account for anonymous'],
  ['IWAM_ACE', 'Launch IIS Process Account', 'Built-in account for Internet Information'],
  ['lyn', '', '', 'off'],
  ['N2P_User', 'Net2Printer Service Account', 'This is required to run Net2Printer'],
  ['pmp', 'pmp', ''],
  ['QBDataServi...', 'QBDataServiceUser18', 'This account has been established'],
  ['QBDataServi...', 'QBDataServiceUser20', 'This account has been established'],
  ['QBDataServi...', 'QBDataServiceUser23', 'This account has been established'],
  ['sally', 'sally', 'Disabled as per tkt 67349'],
  ['sandra', 'sandra', 'sandra', 'off'],
  ['SUPPORT_38...', 'CN=Microsoft Corporation', "This is a vendor's account for the", 'off']
];

class MmcUsers extends BaseElement {
  render() {
    const marks = { off: OFF_BADGE, picked: PICKED_TINT };
    const rows = USERS.map(([name, full, about, state]) => `
      <tr class="${state || ''}">
        <td><div class="name">${small('user', marks[state])}<span>${name}</span></div></td>
        <td>${full}</td><td>${about}</td>
      </tr>`);
    this._shadowDOM.innerHTML = `
      <style>
        :host {
          display: grid;
          grid-template: minmax(0, 1fr) 16px / minmax(0, 1fr) 16px;
          min-width: 0;
          min-height: 0;
          background: #fff;
        }
        .view { overflow: hidden; }
        table {
          width: 100%;
          table-layout: fixed;
          border-collapse: separate;
          border-spacing: 0;
        }
        th, td {
          box-sizing: border-box;
          height: 17px;
          padding: 0 0 0 5px;
          overflow: hidden;
          text-align: left;
          font-weight: 400;
          white-space: nowrap;
        }
        td:first-child { padding-left: 4px; }
        th {
          height: 18px;
          padding-left: 4px;
          ${RAISED}
        }
        .c1 { width: 100px; }
        .c2 { width: 150px; }
        .name {
          display: flex;
          align-items: center;
        }
        .name svg { flex: none; }
        .name span { padding: 2px 1px; }
        .picked td {
          background: var(--navy);
          color: #fff;
        }
        .picked td:first-child { background: linear-gradient(90deg, #fff 20px, var(--navy) 20px); }
        .corner { background: var(--face); }
      </style>
      <div class="view">
        <table>
          <colgroup><col class="c1"><col class="c2"><col></colgroup>
          <thead><tr><th>Name</th><th>Full Name</th><th>Description</th></tr></thead>
          <tbody>${rows.join('')}</tbody>
        </table>
      </div>
      <win-scroll thumb="257" rest="44"></win-scroll>
      <win-scroll across thumb="339" rest="36"></win-scroll>
      <div class="corner"></div>`;
  }
}
customElements.define('mmc-users', MmcUsers);

class MmcWindow extends BaseElement {
  render() {
    this._shadowDOM.innerHTML = `
      <style>
        :host {
          position: absolute;
          left: 314px;
          top: 463px;
          width: 637px;
          box-sizing: border-box;
          padding: 3px 3px 2px;
          background: var(--face);
          border: 1px solid;
          border-color: var(--face) var(--dark) var(--dark) var(--face);
          box-shadow: inset 1px 1px 0 #fff, inset -1px -1px 0 var(--shade);
        }
        header {
          display: flex;
          align-items: center;
          height: 18px;
          margin-bottom: 2px;
          padding: 0 1px 0 2px;
          background: var(--navy);
          color: #fff;
          font-weight: 700;
        }
        h1 {
          flex: 1;
          margin: 0 0 0 1px;
          font: inherit;
        }
        .panes {
          display: grid;
          grid-template: minmax(0, 1fr) / 200px minmax(0, 1fr);
          gap: 3px;
          height: 352px;
          margin: 3px 0 2px;
        }
        .pane {
          display: grid;
          grid-template: minmax(0, 1fr) / minmax(0, 1fr);
          border: solid;
          border-width: 2px 1px 1px 2px;
          border-color: #606060 #fff #fff #606060;
        }
        footer {
          display: flex;
          gap: 2px;
          height: 19px;
        }
        footer div {
          box-sizing: border-box;
          border: 1px solid;
          border-color: var(--shade) #fff #fff var(--shade);
        }
        .s1 { flex: 410; }
        .s2 { flex: 131; }
        .s3 { flex: 83; }
      </style>
      <header>${small('computer')}<h1><slot name="title"></slot></h1><win-keys keys="min max close"></win-keys></header>
      <slot name="bars"></slot>
      <div class="panes">
        <div class="pane"><slot name="tree"></slot></div>
        <div class="pane"><slot name="list"></slot></div>
      </div>
      <footer><div class="s1"></div><div class="s2"></div><div class="s3"></div></footer>`;
  }
}
customElements.define('mmc-window', MmcWindow);

class MenuItem extends BaseElement {
  render() {
    const arrow = this.hasAttribute('submenu') ? '<svg width="5" height="9"><path d="M0 0v8l5-4z"/></svg>' : '';
    this._shadowDOM.innerHTML = `
      <style>
        :host { display: block; }
        button {
          display: flex;
          align-items: center;
          justify-content: space-between;
          width: 100%;
          height: 17px;
          padding: 0 6px 0 16px;
          border: 0;
          background: none;
          font: inherit;
          color: inherit;
        }
        :host([default]) { font-weight: 700; }
      </style>
      <button type="button" role="menuitem"><span><slot></slot></span>${arrow}</button>`;
  }
}
customElements.define('menu-item', MenuItem);

class ContextMenu extends BaseElement {
  render() {
    this._shadowDOM.innerHTML = `
      <style>
        :host {
          position: absolute;
          left: 568px;
          top: 614px;
          width: 121px;
          box-sizing: border-box;
          padding: 2px;
          ${RAISED}
        }
        ::slotted(hr) {
          height: 1px;
          margin: 3px 1px 4px;
          border: 0;
          border-top: 1px solid var(--shade);
          background: #fff;
        }
      </style>
      <div role="menu"><slot></slot></div>`;
  }
}
customElements.define('context-menu', ContextMenu);
</script>
</body>
</html>
